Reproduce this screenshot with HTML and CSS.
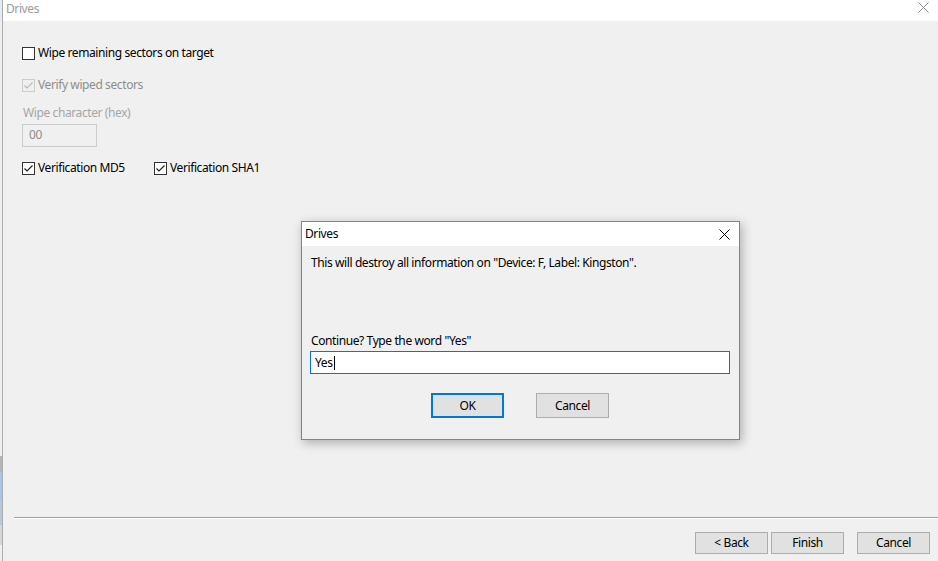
FILE: index.html
```html
<!DOCTYPE html>
<html>
<head>
<meta charset="utf-8">
<link rel="stylesheet" href="styles.css">
</head>
<body>
<div class="screen">
  <div class="behind">
    <div class="b-top"></div>
    <div class="b-fill"></div>
    <div class="b-gray"></div>
    <div class="b-blue1"></div>
    <div class="b-blue2"></div>
    <div class="b-gray2"></div>
    <div class="b-end"></div>
  </div>
  <div class="window">
    <div class="titlebar">
      <span class="title">Drives</span>
      <svg class="close" width="11" height="11" viewBox="0 0 11 11"><path d="M0.5 0.5 L10.5 10.5 M10.5 0.5 L0.5 10.5" stroke="#8c8c8c" stroke-width="1" fill="none"/></svg>
    </div>
    <div class="content">
      <label class="check-row">
        <span class="box"></span><span class="lbl">Wipe remaining sectors on target</span>
      </label>
      <label class="check-row row2 disabled">
        <span class="box"><svg width="11" height="11" viewBox="0 0 11 11"><path d="M1.5 5.5 L4 8 L9.5 2.5" stroke="#bcbcbc" stroke-width="1.2" fill="none"/></svg></span><span class="lbl">Verify wiped sectors</span>
      </label>
      <div class="field-label">Wipe character (hex)</div>
      <div class="hex-input">00</div>
      <div class="check-pair">
        <label class="check-row md5">
          <span class="box"><svg width="11" height="11" viewBox="0 0 11 11"><path d="M1.5 5.5 L4 8 L9.5 2.5" stroke="#222" stroke-width="1.2" fill="none"/></svg></span><span class="lbl">Verification MD5</span>
        </label>
        <label class="check-row">
          <span class="box"><svg width="11" height="11" viewBox="0 0 11 11"><path d="M1.5 5.5 L4 8 L9.5 2.5" stroke="#222" stroke-width="1.2" fill="none"/></svg></span><span class="lbl">Verification SHA1</span>
        </label>
      </div>
    </div>
    <div class="footer">
      <div class="separator"></div>
      <div class="buttons">
        <button class="btn">&lt; Back</button>
        <button class="btn">Finish</button>
        <button class="btn cancel">Cancel</button>
      </div>
    </div>
  </div>

  <div class="dialog">
    <div class="d-titlebar">
      <span class="d-title">Drives</span>
      <svg class="d-close" width="11" height="11" viewBox="0 0 11 11"><path d="M0.5 0.5 L10.5 10.5 M10.5 0.5 L0.5 10.5" stroke="#000" stroke-width="1" fill="none"/></svg>
    </div>
    <div class="d-body">
      <div class="d-msg">This will destroy all information on "Device: F, Label: Kingston".</div>
      <div class="d-prompt">Continue? Type the word "Yes"</div>
      <div class="d-input">Yes<span class="caret"></span></div>
      <div class="d-buttons">
        <button class="btn ok">OK</button>
        <button class="btn">Cancel</button>
      </div>
    </div>
  </div>
</div>
</body>
</html>
```

FILE: styles.css
```css
* { box-sizing: border-box; }
html, body {
  margin: 0;
  padding: 0;
  width: 938px;
  height: 561px;
  overflow: hidden;
}
body {
  font-family: "Noto Sans", "Open Sans", sans-serif;
  font-size: 12px;
  letter-spacing: -0.4px;
  color: #000;
  background: #f0f0f0;
}
.screen {
  position: relative;
  display: flex;
  width: 938px;
  height: 561px;
}
.behind {
  width: 2px;
  display: flex;
  flex-direction: column;
}
.b-top { height: 21px; background: #e3ebf5; }
.b-fill { height: 435px; background: #f0f0f0; }
.b-gray { height: 16px; background: #b4b4b4; }
.b-blue1 { height: 28px; background: #a9c4e6; }
.b-blue2 { height: 25px; background: #b9c6d8; }
.b-gray2 { height: 20px; background: #d6d6d6; }
.b-end { flex: 1; background: #f0f0f0; }

.window {
  flex: 1;
  display: flex;
  flex-direction: column;
  border-left: 1px solid #acacac;
  background: #f0f0f0;
}
.titlebar {
  height: 21px;
  background: #fff;
  display: flex;
  align-items: center;
  justify-content: space-between;
  padding: 0 9px 0 3px;
}
.title {
  color: #9a9a9a;
  line-height: 16px;
  margin-top: -3px;
}
.close { margin-top: -6px; }

.content {
  flex: 1;
  padding: 24px 0 0 19px;
  display: flex;
  flex-direction: column;
  align-items: flex-start;
}
.check-row {
  display: flex;
  align-items: center;
  height: 16px;
  line-height: 16px;
  white-space: nowrap;
}
.box {
  width: 13px;
  height: 13px;
  border: 1px solid #333;
  background: #fff;
  margin-right: 3px;
  display: flex;
  align-items: center;
  justify-content: center;
}
.row2 { margin-top: 16px; }
.disabled .box { border-color: #cccccc; background: #f0f0f0; }
.disabled .lbl { color: #8d8d8d; }
.field-label {
  margin-top: 12px;
  height: 16px;
  line-height: 16px;
  color: #a6a6a6;
  padding-left: 1px;
}
.hex-input {
  margin-top: 3px;
  width: 75px;
  height: 23px;
  border: 1px solid #cccccc;
  background: #f0f0f0;
  color: #8d8d8d;
  line-height: 20px;
  padding-left: 6px;
}
.check-pair {
  margin-top: 13px;
  display: flex;
}
.md5 { width: 132px; }

.footer {
  height: 44px;
  display: flex;
  flex-direction: column;
}
.separator {
  margin-left: 11px;
  height: 2px;
  border-top: 1px solid #a0a0a0;
  border-bottom: 1px solid #fff;
}
.buttons {
  display: flex;
  padding: 13px 0 0 692px;
  gap: 3px;
}
.btn {
  width: 73px;
  height: 22px;
  background: #e1e1e1;
  border: 1px solid #adadad;
  font-family: "Noto Sans", "Open Sans", sans-serif;
  font-size: 12px;
  letter-spacing: -0.4px;
  color: #000;
  padding: 0;
  line-height: 18px;
}
.cancel { margin-left: 10px; }

.dialog {
  position: absolute;
  left: 301px;
  top: 221px;
  width: 439px;
  height: 219px;
  border: 1px solid #838383;
  background: #f0f0f0;
  box-shadow: 2px 3px 10px rgba(0,0,0,0.28);
  display: flex;
  flex-direction: column;
}
.d-titlebar {
  height: 24px;
  background: #fff;
  display: flex;
  align-items: center;
  justify-content: space-between;
  padding: 0 9px 0 3px;
}
.d-title { line-height: 16px; margin-top: -1px; }
.d-body {
  flex: 1;
  padding: 9px 0 0 8px;
  display: flex;
  flex-direction: column;
}
.d-msg { line-height: 16px; padding-left: 1px; }
.d-prompt { margin-top: 62px; line-height: 16px; padding-left: 1px; }
.d-input {
  margin-top: 2px;
  width: 420px;
  height: 23px;
  background: #fff;
  border: 1px solid #0078d7;
  line-height: 20px;
  padding-left: 4px;
  display: flex;
  align-items: center;
}
.caret {
  display: inline-block;
  width: 1px;
  height: 14px;
  background: #000;
  margin-left: 1px;
}
.d-buttons {
  display: flex;
  margin-top: 19px;
  padding-left: 121px;
  gap: 32px;
}
.d-buttons .btn { height: 25px; line-height: 21px; }
.ok { border: 2px solid #0078d7; }
```
